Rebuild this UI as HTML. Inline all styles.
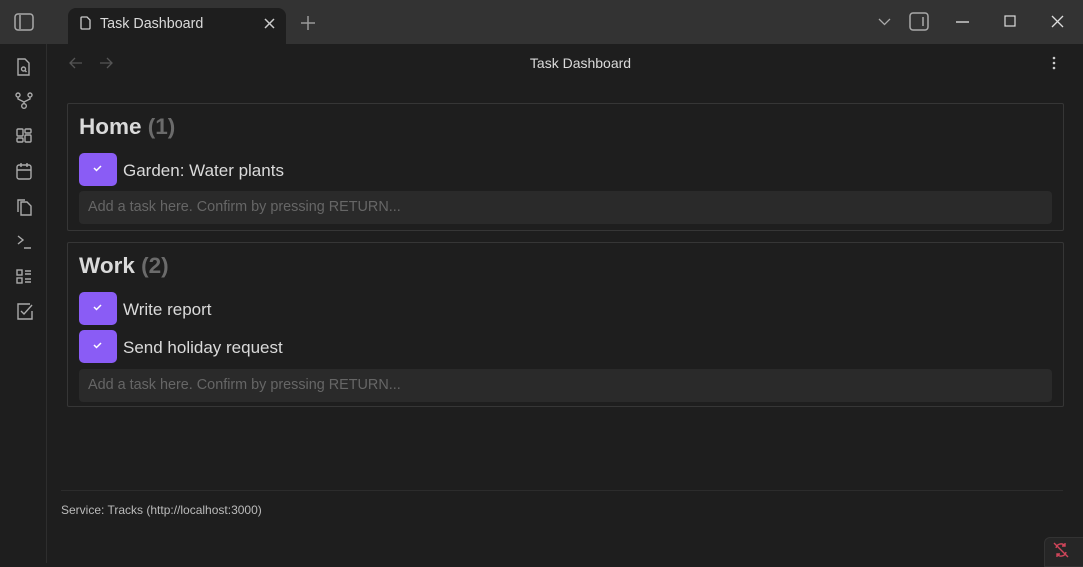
<!DOCTYPE html>
<html><head><meta charset="utf-8"><style>
*{box-sizing:border-box;margin:0;padding:0}
body{width:1083px;height:563px;background:#1e1e1e;font-family:"Liberation Sans",sans-serif;color:#dadada;position:relative;overflow:hidden}
.top{position:absolute;left:0;top:0;width:1083px;height:44px;background:#333}
.tab{position:absolute;left:68px;top:8px;width:218px;height:36px;background:#1e1e1e;border-radius:8px 8px 0 0}
.tab span{position:absolute;left:32px;top:8px;font-size:14.3px;color:#dadada}
.side{position:absolute;left:0;top:44px;width:47px;height:519px;background:#1e1e1e;border-right:1px solid #2e2e2e}
.title{position:absolute;left:0;width:1083px;top:55px;text-align:center;padding-left:78px;font-size:14px;color:#dadada}
.box{position:absolute;left:67px;width:997px;border:1px solid #363636;border-radius:2px}
h2{position:absolute;left:11px;font-size:22.5px;font-weight:bold;color:#dadada}
h2 b{color:#6b6b6b}
.cb{position:absolute;left:11px;width:38px;height:33px;background:#8a5cf5;border-radius:5px}
.cb svg{position:absolute;left:13px;top:10px}
.t{position:absolute;left:55px;font-size:17px;color:#dadada}
.in{position:absolute;left:11px;width:973px;height:33px;background:#2a2a2a;border-radius:4px;font-size:14.4px;color:#666;padding:8px 9px}
svg{position:absolute}
</style></head><body>
<div class="top"></div>
<svg style="left:14px;top:13px" width="20" height="18" viewBox="0 0 20 18" fill="none" stroke="#aaa" stroke-width="1.5"><rect x="1" y="1" width="18" height="16" rx="3"/><line x1="6" y1="2" x2="6" y2="16"/></svg>
<div class="tab"><span>Task Dashboard</span></div>
<svg style="left:80px;top:16px" width="11" height="14" viewBox="0 0 11 14" fill="none" stroke="#ccc" stroke-width="1.3"><path d="M1 2a1 1 0 0 1 1-1h5l3 3v8a1 1 0 0 1-1 1H2a1 1 0 0 1-1-1z"/></svg>
<svg style="left:264px;top:18px" width="11" height="11" stroke="#ccc" stroke-width="1.5"><path d="M1 1l9 9M10 1l-9 9"/></svg>
<svg style="left:301px;top:16px" width="14" height="14" stroke="#999" stroke-width="1.5"><path d="M7 0v14M0 7h14"/></svg>
<svg style="left:878px;top:18px" width="13" height="8" fill="none" stroke="#aaa" stroke-width="1.3"><path d="M1 1l5.5 5.5L12 1"/></svg>
<svg style="left:909px;top:12px" width="21" height="20" fill="none" stroke="#aaa" stroke-width="1.5"><rect x="1" y="1" width="18" height="17" rx="3"/><line x1="14" y1="5" x2="14" y2="14"/></svg>
<svg style="left:956px;top:21px" width="13" height="2" stroke="#ccc" stroke-width="1.5"><path d="M0 1h13"/></svg>
<svg style="left:1004px;top:15px" width="12" height="12" fill="none" stroke="#ddd" stroke-width="1.2"><rect x="1" y="1" width="10" height="10"/></svg>
<svg style="left:1051px;top:15px" width="13" height="13" stroke="#ddd" stroke-width="1.3"><path d="M1 1l11 11M12 1L1 12"/></svg>
<div class="side"></div>
<svg style="left:14px;top:57px" width="20" height="240" fill="none" stroke="#aaa" stroke-width="1.4">
<path d="M4 2h7l4 4v12H4z"/><circle cx="9.5" cy="12" r="2"/><path d="M11 13.5l1.5 1.5"/>
<g transform="translate(0,35)"><circle cx="4" cy="3" r="2"/><circle cx="16" cy="3" r="2"/><circle cx="10" cy="14" r="2.3"/><path d="M4 5v2l6 3 6-3V5M10 10v1.5"/></g>
<g transform="translate(0,70)"><rect x="3" y="2" width="6" height="7" rx="1"/><rect x="11" y="2" width="6" height="4" rx="1"/><rect x="3" y="11" width="6" height="4" rx="1"/><rect x="11" y="8" width="6" height="7" rx="1"/></g>
<g transform="translate(0,105)"><rect x="3" y="3" width="14" height="14" rx="2"/><path d="M3 8h14M7 1v4M13 1v4"/></g>
<g transform="translate(0,140)"><path d="M7 5h6l4 4v9H7z"/><path d="M4 15V3h7"/></g>
<g transform="translate(0,175)"><path d="M4 4l5 4-5 4M10 16h7"/></g>
<g transform="translate(0,210)"><rect x="3" y="3" width="5" height="5"/><rect x="3" y="11" width="5" height="5"/><path d="M11 4h6M11 7h6M11 12h6M11 15h6"/></g>
</svg>
<svg style="left:15px;top:302px" width="20" height="20" fill="none" stroke="#aaa" stroke-width="1.4"><path d="M15 2H3v15h14V9"/><path d="M6 9l3 3 8-9"/></svg>
<svg style="left:69px;top:57px" width="50" height="12" fill="none" stroke="#555" stroke-width="1.3"><path d="M13 6H1M6 1L1 6l5 5M31 6h12M38 1l5 5-5 5"/></svg>
<div class="title">Task Dashboard</div>
<svg style="left:1052px;top:56px" width="4" height="14" fill="#ccc"><circle cx="2" cy="2" r="1.3"/><circle cx="2" cy="7" r="1.3"/><circle cx="2" cy="12" r="1.3"/></svg>
<div class="box" style="top:103px;height:128px">
<h2 style="top:10px">Home <b>(1)</b></h2>
<div class="cb" style="top:49px"><svg width="12" height="10" fill="none" stroke="#fff" stroke-width="1.5"><path d="M2 5l2.5 2.5L9 3"/></svg></div>
<div class="t" style="top:57px">Garden: Water plants</div>
<div class="in" style="top:87px">Add a task here. Confirm by pressing RETURN...</div>
</div>
<div class="box" style="top:242px;height:165px">
<h2 style="top:10px">Work <b>(2)</b></h2>
<div class="cb" style="top:49px"><svg width="12" height="10" fill="none" stroke="#fff" stroke-width="1.5"><path d="M2 5l2.5 2.5L9 3"/></svg></div>
<div class="t" style="top:57px">Write report</div>
<div class="cb" style="top:87px"><svg width="12" height="10" fill="none" stroke="#fff" stroke-width="1.5"><path d="M2 5l2.5 2.5L9 3"/></svg></div>
<div class="t" style="top:95px">Send holiday request</div>
<div class="in" style="top:126px">Add a task here. Confirm by pressing RETURN...</div>
</div>
<div style="position:absolute;left:61px;top:490px;width:1002px;height:1px;background:#2c2c2c"></div>
<div style="position:absolute;left:61px;top:503px;font-size:12px;color:#bbb">Service: Tracks (http://localhost:3000)</div>
<div style="position:absolute;left:1044px;top:537px;width:45px;height:30px;background:#262626;border:1px solid #333;border-radius:6px 0 0 0"></div>
<svg style="left:1053px;top:542px" width="16" height="16" fill="none" stroke="#d0455a" stroke-width="1.4"><path d="M3 6a5 5 0 0 1 9-2M13 10a5 5 0 0 1-9 2M12 1v3h-3M4 15v-3h3M1 1l14 14"/></svg>
</body></html>
